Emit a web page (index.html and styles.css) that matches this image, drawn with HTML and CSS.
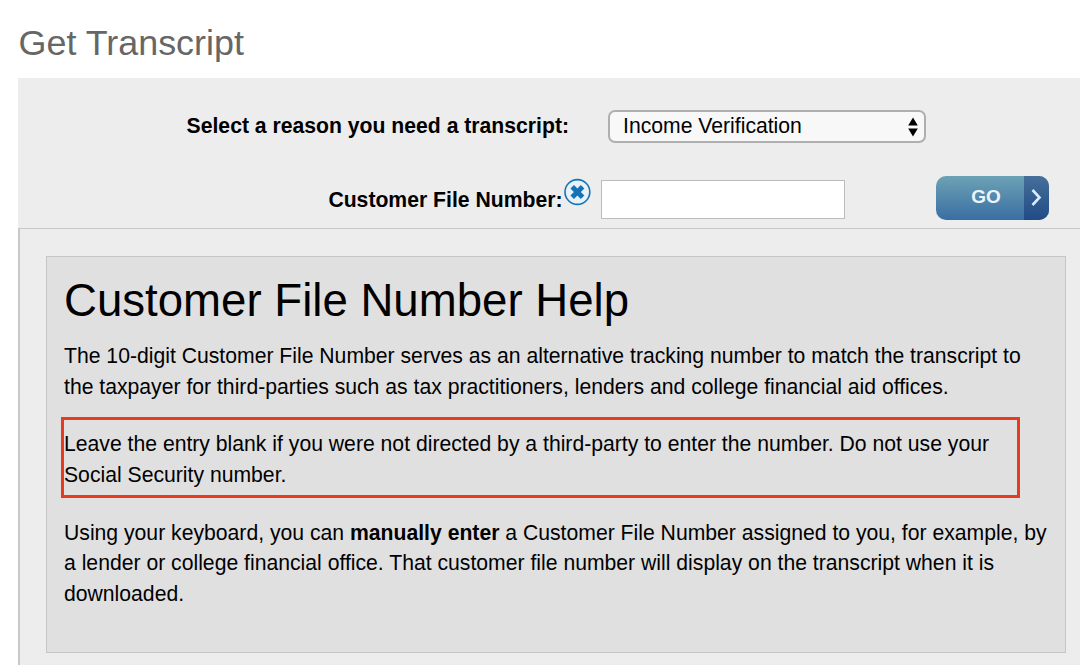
FILE: index.html
```html
<!DOCTYPE html>
<html lang="en">

<head>
    <meta charset="UTF-8">
    <meta name="viewport" content="width=device-width, initial-scale=1.0">
    <title>Get Transcript</title>
    <link rel="stylesheet" href="styles.css">
</head>

<body>
    <h1>Get Transcript</h1>

    <div class="container">
        <form class="transcript-form">
            <div class="row reason-row">
                <label for="reason">Select a reason you need a transcript:</label>
                <div class="select-wrap">
                    <select id="reason">
                        <option>Income Verification</option>
                    </select>
                    <svg class="arrows" width="10" height="20" viewBox="0 0 10 20">
                        <path d="M5 0.5L9.8 8.5H0.2zM5 19.5L0.2 11.5H9.8z" />
                    </svg>
                </div>
            </div>

            <div class="row number-row">
                <label for="fileNumber">Customer File Number:</label>
                <svg class="close-icon" width="28" height="28" viewBox="0 0 28 28">
                    <circle cx="14.4" cy="14" r="12.4" />
                    <path d="M9.2 8.8L19.6 19.2M19.6 8.8L9.2 19.2" />
                </svg>
                <input type="text" id="fileNumber">
                <button type="button" class="go-button">
                    <span class="go-text">GO</span>
                    <span class="go-arrow">
                        <svg width="12" height="18" viewBox="0 0 12 18">
                            <path d="M1.5 1L8.5 8.5L1.5 16" />
                        </svg>
                    </span>
                </button>
            </div>
        </form>

        <div class="help-wrap">
            <div class="help">
                <h2>Customer File Number Help</h2>
                <p>The 10-digit Customer File Number serves as an alternative tracking number to match the transcript to<br>
                    the taxpayer for third-parties such as tax practitioners, lenders and college financial aid offices.</p>
                <p class="notice">Leave the entry blank if you were not directed by a third-party to enter the number. Do not use your<br>
                    Social Security number.</p>
                <p>Using your keyboard, you can <strong>manually enter</strong> a Customer File Number assigned to you, for example, by<br>
                    a lender or college financial office. That customer file number will display on the transcript when it is<br>
                    downloaded.</p>
            </div>
        </div>
    </div>
</body>

</html>
```
FILE: styles.css
```css
* {
    box-sizing: border-box;
}

body {
    font-family: "Liberation Sans", Helvetica, Arial, sans-serif;
    font-size: 21.18px;
    margin: 0;
    height: 665px;
    overflow: hidden;
    background-color: #fff;
    color: #000;
}

h1 {
    margin: 0;
    height: 78px;
    padding: 22px 0 0 18.5px;
    font-size: 35.9px;
    line-height: 42px;
    font-weight: normal;
    color: #666;
}

.container {
    margin-left: 18px;
    background-color: #ededed;
}

.transcript-form {
    height: 150px;
    padding-top: 32px;
}

.row {
    display: flex;
}

.row label {
    font-weight: bold;
    line-height: 24px;
    text-align: right;
    white-space: nowrap;
}

.reason-row label {
    width: 551px;
    padding-top: 4px;
}

.select-wrap {
    display: flex;
    align-items: center;
    width: 318px;
    height: 33px;
    margin-left: 39px;
    padding-right: 6px;
    border: 2px solid #afafaf;
    border-radius: 7px;
    background-color: #f8f8f8;
}

.select-wrap select {
    flex: 1;
    appearance: none;
    border: 0;
    padding: 0 0 2px 13px;
    background: none;
    font: inherit;
    color: #000;
}

.arrows {
    fill: #000;
}

.number-row {
    margin-top: 33px;
}

.number-row label {
    width: 544.5px;
    padding-top: 12px;
}

.close-icon {
    fill: #e6f2fa;
    stroke: #1673b3;
    stroke-width: 1.6;
    margin-top: 2px;
}

.close-icon path {
    stroke-width: 5;
}

#fileNumber {
    width: 244px;
    height: 39px;
    margin: 4px 0 0 10.5px;
    padding: 0 8px;
    border: 1px solid #bbb;
    background-color: #fff;
    font: inherit;
}

.go-button {
    display: flex;
    width: 113px;
    height: 44px;
    margin-left: 91px;
    padding: 0;
    border: 0;
    border-radius: 10px;
    overflow: hidden;
    background: linear-gradient(#6ca2b5, #3a6ea3);
    color: #eaf6ff;
    font: bold 19px "Liberation Sans", Arial, sans-serif;
}

.go-text {
    flex: 1;
    padding-left: 12px;
    line-height: 42px;
}

.go-arrow {
    display: flex;
    align-items: center;
    width: 25px;
    height: 44px;
    padding-left: 7px;
    background: linear-gradient(#466f99, #204b87);
}

.go-arrow path {
    fill: none;
    stroke: #d8ecff;
    stroke-width: 2.6;
}

.help-wrap {
    height: 450px;
    padding: 27px 14px 0 27px;
    border: 1px solid #c8c8c8;
    border-right: 0;
    border-left-width: 2px;
}

.help {
    width: 1020px;
    height: 397px;
    margin-left: -1px;
    padding: 17px;
    border: 1px solid #c6c6c6;
    background-color: #e0e0e0;
}

.help h2 {
    margin: 0 0 13px;
    font-size: 45.6px;
    line-height: 54px;
    font-weight: normal;
}

.help p {
    margin: 0;
    line-height: 30.8px;
    white-space: nowrap;
}

.help .notice {
    width: 959px;
    height: 81px;
    margin: 14px 0 20px -3px;
    padding: 8px 0 0;
    border: 3px solid #e83a1e;
    line-height: 31px;
}
```
